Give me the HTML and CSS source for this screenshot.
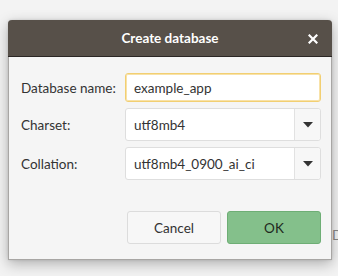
FILE: index.html
```html
<!DOCTYPE html>
<html>
<head>
<meta charset="utf-8">
<link rel="stylesheet" href="styles.css">
</head>
<body>
<div class="backdrop-text">Database</div>
<div class="dialog">
  <div class="titlebar">
    <span class="title">Create database</span>
    <span class="close">
      <svg width="10" height="10" viewBox="0 0 10 10"><path d="M1.5 1.5 L8.5 8.5 M8.5 1.5 L1.5 8.5" stroke="#fff" stroke-width="2.2" stroke-linecap="square"/></svg>
    </span>
  </div>
  <div class="content">
    <div class="form">
      <label class="label">Database name:</label>
      <div class="entry">example_app</div>
      <label class="label">Charset:</label>
      <div class="combo"><span class="value">utf8mb4</span><span class="drop"><svg width="10" height="6" viewBox="0 0 10 6"><path d="M0 0 L10 0 L5 5.5 Z" fill="#333"/></svg></span></div>
      <label class="label">Collation:</label>
      <div class="combo"><span class="value">utf8mb4_0900_ai_ci</span><span class="drop"><svg width="10" height="6" viewBox="0 0 10 6"><path d="M0 0 L10 0 L5 5.5 Z" fill="#333"/></svg></span></div>
    </div>
    <div class="actions">
      <button class="btn">Cancel</button>
      <button class="btn ok">OK</button>
    </div>
  </div>
</div>
</body>
</html>
```
FILE: styles.css
```css
html, body {
  margin: 0;
  padding: 0;
}
body {
  width: 338px;
  height: 276px;
  background: #f3f3f3;
  font-family: Lato, "Noto Sans", sans-serif;
  font-size: 13.5px;
  color: #333;
  position: relative;
  overflow: hidden;
  padding-top: 20px;
  box-sizing: border-box;
}
.backdrop-text {
  position: absolute;
  left: 332px;
  top: 227px;
  color: #8a8a8a;
  font-size: 13.5px;
}
.dialog {
  position: relative;
  margin-left: 8px;
  width: 324px;
  height: 240px;
  box-sizing: border-box;
  border: 1px solid #a8a6a4;
  border-top: none;
  border-radius: 4px 4px 0 0;
  background: #f5f5f5;
  box-shadow: 0 4px 14px rgba(0,0,0,0.28), 0 0 3px rgba(0,0,0,0.12);
  display: flex;
  flex-direction: column;
}
.titlebar {
  height: 36px;
  background: #575049;
  border-bottom: 1px solid #2b2725;
  border-radius: 4px 4px 0 0;
  margin: 0 -1px;
  display: flex;
  align-items: center;
  justify-content: center;
  position: relative;
  color: #fff;
  font-weight: bold;
  font-size: 13.5px;
}
.close {
  position: absolute;
  right: 14px;
  top: 14px;
  width: 10px;
  height: 10px;
  display: flex;
}
.content {
  flex: 1;
  display: flex;
  flex-direction: column;
  padding: 16px 10px 15px 12px;
}
.form {
  display: grid;
  grid-template-columns: 104px 196px;
  row-gap: 6px;
  align-items: center;
}
.label {
  font-size: 13.5px;
  color: #333;
}
.entry {
  height: 29px;
  box-sizing: border-box;
  border: 1px solid #f2cf72;
  box-shadow: inset 0 0 0 1px #f8e2a8;
  border-radius: 3px;
  background: #fff;
  padding-left: 8px;
  display: flex;
  align-items: center;
  font-size: 13.5px;
  color: #333;
}
.combo {
  height: 33px;
  box-sizing: border-box;
  border: 1px solid #dedede;
  border-radius: 3px;
  background: #fff;
  display: flex;
  align-items: stretch;
}
.combo .value {
  flex: 1;
  padding-left: 8px;
  display: flex;
  align-items: center;
  font-size: 13.5px;
  color: #333;
}
.combo .drop {
  width: 25px;
  border-left: 1px solid #e2e2e2;
  background: #f7f7f7;
  border-radius: 0 3px 3px 0;
  display: flex;
  align-items: center;
  justify-content: center;
}
.actions {
  margin-top: auto;
  display: flex;
  justify-content: flex-end;
  gap: 6px;
}
.btn {
  width: 94px;
  height: 33px;
  box-sizing: border-box;
  border: 1px solid #dcdcdc;
  border-radius: 3px;
  background: #f7f7f7;
  font-family: Lato, "Noto Sans", sans-serif;
  font-size: 13.5px;
  color: #333;
  padding: 0;
}
.btn.ok {
  background: #84c08b;
  border-color: #6eae75;
  color: #1f2a20;
}
```
